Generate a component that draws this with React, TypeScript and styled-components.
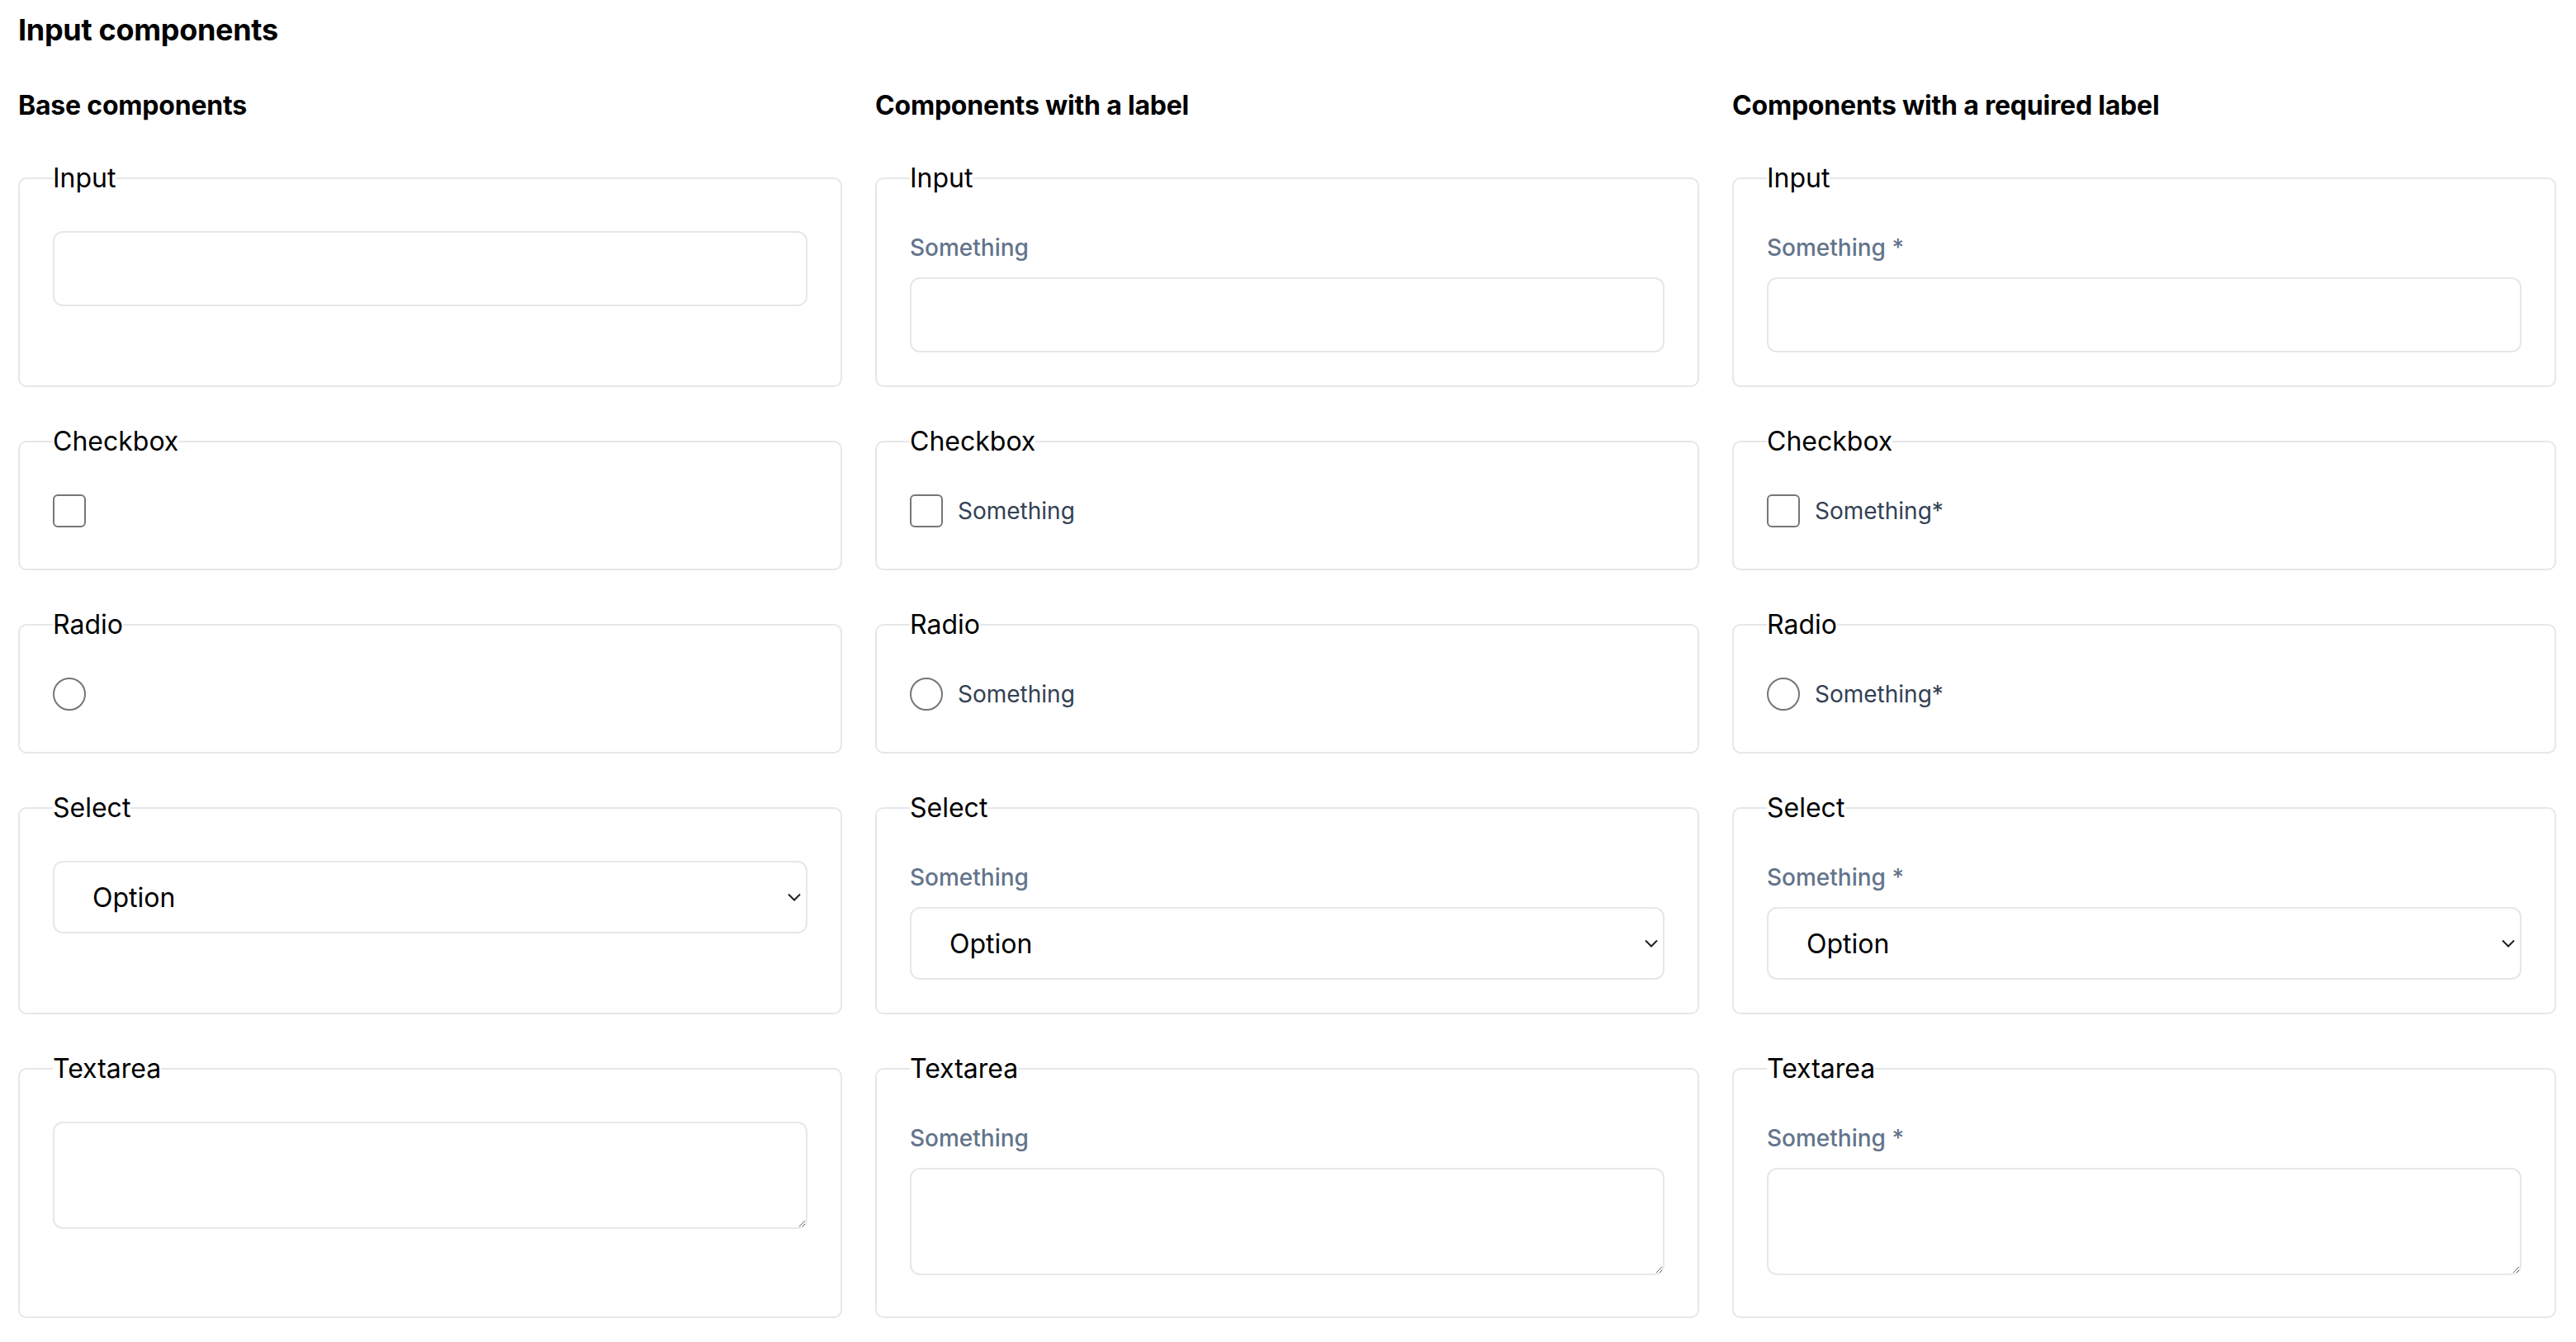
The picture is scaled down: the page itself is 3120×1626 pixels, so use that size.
import React, { FC } from 'react';
import styled, { createGlobalStyle } from 'styled-components';

type TVariant = 'base' | 'label' | 'required';
type TKind = 'input' | 'checkbox' | 'radio' | 'select' | 'textarea';

interface FieldProps {
  kind: TKind;
  variant: TVariant;
}

const COLUMNS: { title: string; variant: TVariant }[] = [
  { title: 'Base components', variant: 'base' },
  { title: 'Components with a label', variant: 'label' },
  { title: 'Components with a required label', variant: 'required' },
];

const ROWS: { kind: TKind; legend: string }[] = [
  { kind: 'input', legend: 'Input' },
  { kind: 'checkbox', legend: 'Checkbox' },
  { kind: 'radio', legend: 'Radio' },
  { kind: 'select', legend: 'Select' },
  { kind: 'textarea', legend: 'Textarea' },
];

const GlobalStyle = createGlobalStyle`
  html, body {
    margin: 0;
    padding: 0;
    background: #ffffff;
  }
  body {
    font-family: Inter, 'Liberation Sans', sans-serif;
    color: #000000;
  }
`;

const Page = styled.main`
  padding: 8px 24px 0 22px;
  box-sizing: border-box;
  width: 100%;
`;

const Title = styled.h1`
  margin: 0 0 38px 0;
  font-size: 36px;
  line-height: 56px;
  font-weight: 700;
  letter-spacing: -0.3px;
`;

const Grid = styled.div`
  display: grid;
  grid-template-columns: repeat(3, minmax(0, 1fr));
  column-gap: 40px;
  row-gap: 42px;
`;

const ColumnTitle = styled.h2`
  margin: 2px 0 -2px 0;
  font-size: 32px;
  line-height: 48px;
  font-weight: 700;
  letter-spacing: -0.2px;
`;

const Fieldset = styled.fieldset`
  margin: 0;
  min-width: 0;
  padding: 40px 40px 40px;
  border: 2px solid #e5e7eb;
  border-radius: 10px;
`;

const Legend = styled.legend`
  padding: 0;
  font-size: 32px;
  line-height: 48px;
  font-weight: 400;
`;

const FieldLabel = styled.label`
  display: block;
  margin-bottom: 16px;
  font-size: 28px;
  line-height: 40px;
  font-weight: 500;
  color: #64748b;
`;

const boxStyles = `
  display: block;
  width: 100%;
  box-sizing: border-box;
  border: 2px solid #e5e7eb;
  border-radius: 12px;
  background: #ffffff;
  font-family: Inter, 'Liberation Sans', sans-serif;
  font-size: 32px;
  color: #000000;
  outline: none;
  margin: 0;
`;

const TextInput = styled.input`
  ${boxStyles}
  height: 91px;
  padding: 0 24px;
`;

const TextArea = styled.textarea`
  ${boxStyles}
  height: 130px;
  padding: 16px 24px;
  margin-bottom: 10px;
  resize: vertical;
`;

const SelectWrap = styled.div`
  position: relative;
`;

const Select = styled.select`
  ${boxStyles}
  height: 88px;
  padding: 0 40px 0 46px;
  appearance: none;
`;

const Chevron = styled.svg`
  position: absolute;
  right: 8px;
  top: 50%;
  width: 16px;
  height: 10px;
  margin-top: -5px;
  pointer-events: none;
`;

const CheckRow = styled.div`
  display: flex;
  align-items: center;
  gap: 18px;
  height: 40px;
  margin-bottom: 10px;
`;

const CheckInput = styled.input<{ $round?: boolean }>`
  appearance: none;
  flex: none;
  width: 40px;
  height: 40px;
  margin: 0;
  box-sizing: border-box;
  border: 2px solid #767676;
  border-radius: ${({ $round }) => ($round ? '50%' : '6px')};
  background: #ffffff;
`;

const CheckLabel = styled.label`
  font-size: 28px;
  line-height: 40px;
  color: #334155;
`;

const getLabel = (variant: TVariant, compact = false) => {
  if (variant === 'base') return null;
  if (variant === 'label') return 'Something';
  return compact ? 'Something*' : 'Something *';
};

const Field: FC<FieldProps> = ({ kind, variant }) => {
  const label = getLabel(variant, kind === 'checkbox' || kind === 'radio');

  if (kind === 'checkbox' || kind === 'radio') {
    return (
      <CheckRow>
        <CheckInput type={kind} $round={kind === 'radio'} />
        {label && <CheckLabel>{label}</CheckLabel>}
      </CheckRow>
    );
  }

  return (
    <>
      {label && <FieldLabel>{label}</FieldLabel>}
      {kind === 'input' && <TextInput type='text' />}
      {kind === 'textarea' && <TextArea />}
      {kind === 'select' && (
        <SelectWrap>
          <Select defaultValue='option'>
            <option value='option'>Option</option>
          </Select>
          <Chevron viewBox='0 0 16 10' fill='none'>
            <path d='M1 1.5L8 8.5L15 1.5' stroke='#1f1f1f' strokeWidth='2' />
          </Chevron>
        </SelectWrap>
      )}
    </>
  );
};

const App: FC = () => (
  <Page>
    <GlobalStyle />
    <Title>Input components</Title>
    <Grid>
      {COLUMNS.map((column) => (
        <ColumnTitle key={column.title}>{column.title}</ColumnTitle>
      ))}
      {ROWS.map((row) => COLUMNS.map((column) => (
        <Fieldset key={`${row.kind}-${column.variant}`}>
          <Legend>{row.legend}</Legend>
          <Field kind={row.kind} variant={column.variant} />
        </Fieldset>
      )))}
    </Grid>
  </Page>
);

export default App;
